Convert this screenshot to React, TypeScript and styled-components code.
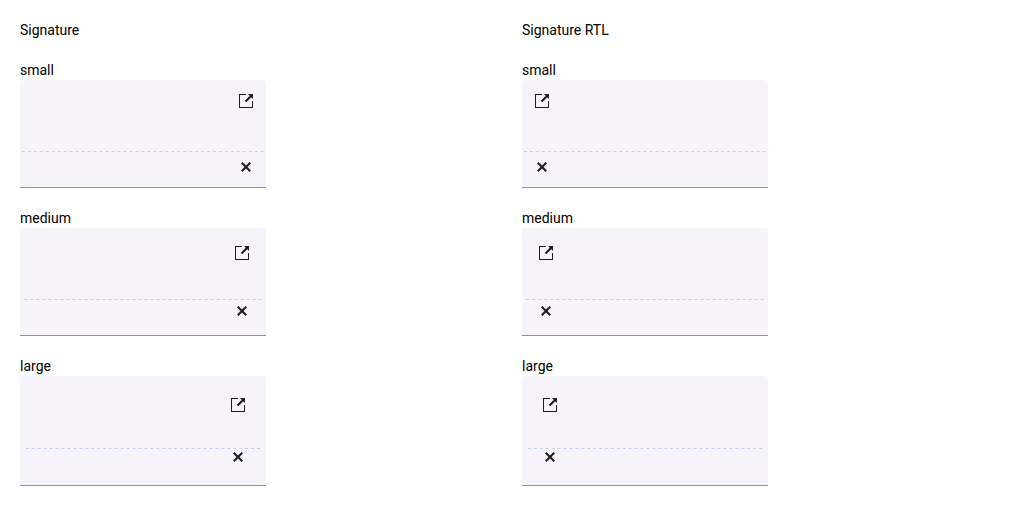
import React from "react";
import styled, { createGlobalStyle } from "styled-components";

type Size = "small" | "medium" | "large";

const sizes: Size[] = ["small", "medium", "large"];
const inset: Record<Size, number> = { small: 2, medium: 4, large: 6 };
const buttonSize: Record<Size, number> = { small: 36, medium: 40, large: 44 };
const padHeight: Record<Size, number> = { small: 108, medium: 108, large: 110 };

const GlobalStyle = createGlobalStyle`
  *, *::before, *::after { box-sizing: border-box; }
  body {
    margin: 0;
    background: #ffffff;
    color: #000000;
    font: 14px/20px Roboto, sans-serif;
  }
`;

const Page = styled.main`
  display: grid;
  grid-template-columns: 1fr 1fr;
  gap: 20px;
  padding: 20px;
`;

const Column = styled.section`
  display: flex;
  flex-direction: column;
  gap: 20px;
`;

const Title = styled.h1`
  margin: 0;
  font-size: 14px;
  font-weight: 400;
`;

const Label = styled.h2`
  margin: 0;
  font-size: 14px;
  font-weight: 400;
`;

const Pad = styled.div<{ $size: Size }>`
  position: relative;
  display: flex;
  flex-direction: column;
  align-items: flex-end;
  justify-content: space-between;
  width: 246px;
  max-width: 100%;
  min-height: ${(p) => padHeight[p.$size]}px;
  padding: ${(p) => inset[p.$size]}px;
  border-top: 1px solid #f6f3fb;
  border-bottom: 1px solid #928f99;
  border-radius: 4px 4px 0 0;
  background: #f6f3fb;
`;

/* The right edge runs one gap further so that the last dash ends at the inset. */
const SigningLine = styled.div<{ $size: Size }>`
  position: absolute;
  right: ${(p) => inset[p.$size] - 3}px;
  bottom: 33%;
  left: ${(p) => inset[p.$size]}px;
  height: 1px;
  background: linear-gradient(to right, #c4d0f2 50%, transparent 50%) 0 0 / 6px 1px round;
`;

const IconButton = styled.button<{ $size: Size }>`
  display: flex;
  align-items: center;
  justify-content: center;
  width: ${(p) => buttonSize[p.$size]}px;
  height: ${(p) => buttonSize[p.$size]}px;
  padding: 0;
  border: 0;
  border-radius: 50%;
  background: transparent;
  color: #1c1b1f;
  cursor: pointer;
`;

const Icon = styled.svg`
  width: 16px;
  height: 16px;
  fill: currentColor;
`;

function Signature({ size, rtl }: { size: Size; rtl?: boolean }) {
  return (
    <div>
      <Label>{size}</Label>
      <Pad $size={size} dir={rtl ? "rtl" : "ltr"}>
        <SigningLine $size={size} />
        <IconButton type="button" aria-label="Maximize" $size={size}>
          <Icon viewBox="0 0 512 512" aria-hidden="true">
            <path d="M448 256v192H64V64h192V32H32v448h448V256zM480 32H320l57 57-160 160 46 46 160-160 57 57z" />
          </Icon>
        </IconButton>
        <IconButton type="button" aria-label="Clear" $size={size}>
          <Icon viewBox="0 0 512 512" aria-hidden="true">
            <path d="M416 141.3 370.7 96 256 210.7 141.3 96 96 141.3 210.7 256 96 370.7 141.3 416 256 301.3 370.7 416 416 370.7 301.3 256z" />
          </Icon>
        </IconButton>
      </Pad>
    </div>
  );
}

function Examples({ title, rtl }: { title: string; rtl?: boolean }) {
  return (
    <Column>
      <Title>{title}</Title>
      {sizes.map((size) => (
        <Signature key={size} size={size} rtl={rtl} />
      ))}
    </Column>
  );
}

export default function App() {
  return (
    <>
      <GlobalStyle />
      <Page>
        <Examples title="Signature" />
        <Examples title="Signature RTL" rtl />
      </Page>
    </>
  );
}
